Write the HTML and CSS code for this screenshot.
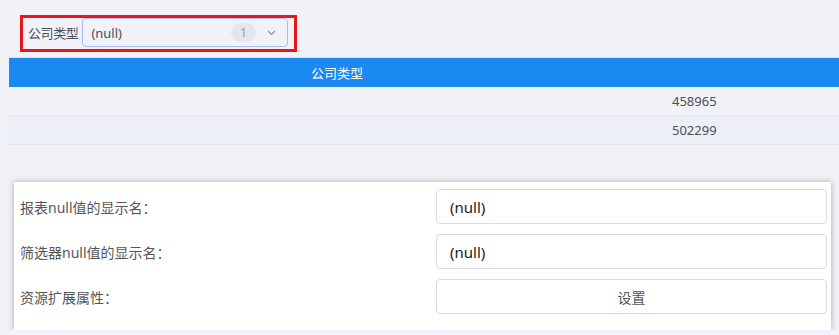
FILE: index.html
```html
<!DOCTYPE html>
<html lang="zh-CN">
<head>
    <meta charset="UTF-8">
    <title>公司类型</title>
    <link rel="stylesheet" href="styles.css">
</head>
<body>

    <div class="filter-bar">
        <div class="filter-box">
            <span class="filter-label">公司类型</span>
            <div class="select">
                <span class="select-value">(null)</span>
                <span class="badge">1</span>
                <svg class="chevron" width="9" height="6" viewBox="0 0 9 6">
                    <path d="M1 1 L4.5 4.5 L8 1" fill="none" stroke="#8a8f99" stroke-width="1.1"/>
                </svg>
            </div>
        </div>
    </div>

    <table class="data-table">
        <thead>
            <tr>
                <th class="col-type">公司类型</th>
                <th></th>
            </tr>
        </thead>
        <tbody>
            <tr>
                <td></td>
                <td class="num">458965</td>
            </tr>
            <tr>
                <td></td>
                <td class="num">502299</td>
            </tr>
        </tbody>
    </table>

    <!-- 属性设置面板 -->
    <div class="settings">
        <label class="settings-label">报表null值的显示名：</label>
        <input class="settings-input" type="text" value="(null)">
        <label class="settings-label">筛选器null值的显示名：</label>
        <input class="settings-input" type="text" value="(null)">
        <label class="settings-label">资源扩展属性：</label>
        <button class="settings-button">设置</button>
    </div>

</body>
</html>
```

FILE: styles.css
```css
body {
    margin: 0;
    background: #f0f2f7;
    font-family: "Noto Sans", "Noto Sans CJK SC", sans-serif;
    color: #555;
    overflow: hidden;
}

.filter-bar {
    padding: 15px 0 0 20px;
}

.filter-box {
    display: inline-flex;
    align-items: center;
    gap: 4px;
    width: 277px;
    height: 37px;
    box-sizing: border-box;
    border: 3px solid #e8151d;
    padding: 0 6px 2px 5px;
}

.filter-label {
    font-size: 13px;
    letter-spacing: -0.4px;
    color: #4a4f5c;
    white-space: nowrap;
}

.select {
    display: flex;
    align-items: center;
    flex: 1;
    height: 29px;
    box-sizing: border-box;
    border: 1px solid #a8bcf3;
    border-radius: 4px;
    padding: 0 11px 0 8px;
}

.select-value {
    flex: 1;
    font-size: 13px;
    color: #4a4f5c;
}

.badge {
    width: 25px;
    height: 19px;
    line-height: 19px;
    border-radius: 10px;
    background: #e3e6ec;
    color: #9a9ea8;
    font-size: 13px;
    text-align: center;
    margin-right: 11px;
}

.chevron {
    display: block;
}

.data-table {
    margin: 5px 0 0 9px;
    width: calc(100% - 9px);
    border-collapse: collapse;
    font-size: 13px;
}

.data-table th {
    height: 29px;
    padding: 0;
    background: #1a89f2;
    border-top: 1px solid #d7e4f6;
    color: #fff;
    font-weight: normal;
}

.data-table .col-type {
    width: 656px;
}

.data-table td {
    height: 28px;
    padding: 0 0 0 7px;
    border-bottom: 1px solid #e3e6ed;
    background: #f0f2f7;
    color: #4a4f5c;
}

.data-table tbody tr:nth-child(2) td {
    background: #eceff5;
}

.settings {
    display: grid;
    grid-template-columns: 1fr 391px;
    row-gap: 10px;
    align-items: center;
    width: 817px;
    box-sizing: border-box;
    margin: 37px 0 0 14px;
    padding: 7px 4px 16px 6px;
    background: #fff;
    box-shadow: 0 0 6px rgba(0, 0, 0, 0.3);
}

.settings-label {
    font-size: 14px;
    color: #555;
}

.settings-input,
.settings-button {
    height: 35px;
    box-sizing: border-box;
    border: 1px solid #d9dce6;
    border-radius: 4px;
    background: #fff;
    font-family: "Noto Sans", "Noto Sans CJK SC", sans-serif;
}

.settings-input {
    padding: 0 13px;
    font-size: 15px;
    color: #1a1a1a;
}

.settings-button {
    font-size: 14px;
    color: #555;
}
```
